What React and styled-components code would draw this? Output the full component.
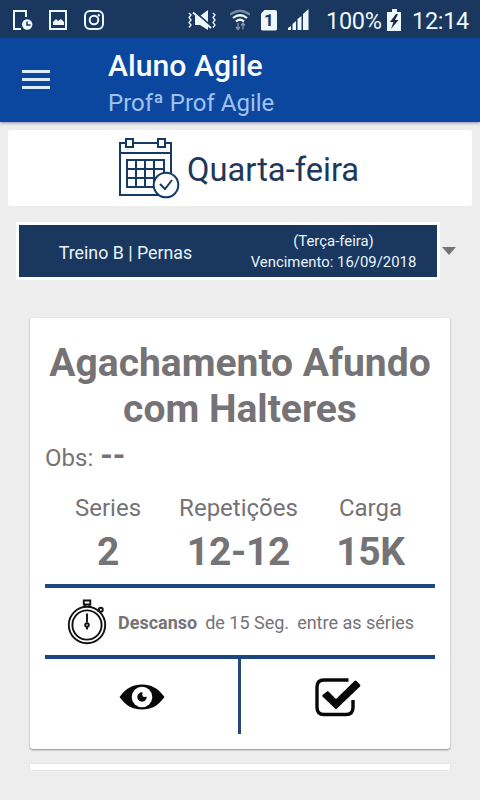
import styled, { createGlobalStyle } from 'styled-components';

const exercise = {
  name: ['Agachamento Afundo', 'com Halteres'],
  obs: '--',
  stats: [
    { label: 'Series', value: '2', width: 126 },
    { label: 'Repetições', value: '12-12', width: 135 },
    { label: 'Carga', value: '15K', width: 129 },
  ],
};

const StatusBar = () => (
  <Status>
    <StatusIcon width="22" height="24" viewBox="0 0 22 24" $left={12}>
      <path
        d="M14 9V3H2v18h7"
        fill="none"
        stroke="currentColor"
        strokeWidth="2"
      />
      <circle cx="15.2" cy="16.5" r="5.2" fill="currentColor" />
      <path d="M15 13.5V17h3.5" fill="none" stroke="#19375f" strokeWidth="1.5" />
    </StatusIcon>
    <StatusIcon width="20" height="22" viewBox="0 0 20 22" $left={14}>
      <rect
        x="2"
        y="2"
        width="16"
        height="18"
        fill="none"
        stroke="currentColor"
        strokeWidth="2"
      />
      <path d="M5 16v-3l3-3 2 2 3-2 3 3v3z" fill="currentColor" />
    </StatusIcon>
    <StatusIcon
      width="20"
      height="20"
      viewBox="0 0 20 20"
      $left={16}
      fill="none"
      stroke="currentColor"
      strokeWidth="2"
    >
      <rect x="1" y="1" width="18" height="18" rx="5" />
      <circle cx="10" cy="10" r="4.3" />
      <circle cx="14.8" cy="5.2" r=".6" strokeWidth="1.2" />
    </StatusIcon>
    <StatusIcon width="30" height="22" viewBox="0 0 30 22" $left={83}>
      <path d="M8 7h5l8-6v20l-8-5H8z" fill="currentColor" />
      <path d="M7 2l17 15" stroke="#19375f" strokeWidth="2" />
      <path d="M6 3.500l18 15.500" stroke="currentColor" strokeWidth="2" />
      <path
        d="M2 4l2 2-2 2.5 2 2.5-2 2.5 2 2.5-2 2.5M26 4l2 2-2 2.5 2 2.5-2 2.5 2 2.5-2 2.5"
        fill="none"
        stroke="currentColor"
        strokeWidth="1.3"
      />
    </StatusIcon>
    <StatusIcon width="20" height="22" viewBox="0 0 20 22" $left={13}>
      <g fill="none" stroke="currentColor" strokeWidth="2.200">
        <path d="M0 5.500q10-7.500 20 0" opacity=".45" />
        <path d="M3 9q7-5.500 14 0M6 12.500q4-3.500 8 0" />
      </g>
      <path
        d="M8 14v6.500m-2-2.500l2 2.500 2-2.500M13 20.500v-6.500m-2 2.500l2-2.500 2 2.500"
        fill="none"
        stroke="#8395ac"
        strokeWidth="1.3"
      />
    </StatusIcon>
    <SimCard>1</SimCard>
    <StatusIcon width="22" height="22" viewBox="0 0 22 22" $left={11}>
      <path
        d="M0 21v-2l3-2v4zM4.500 21v-6l3.500-3v9zM9.500 21V10l4-3v14zM15 21V5l5.500-5v21z"
        fill="currentColor"
      />
    </StatusIcon>
    <StatusText $left={16} $width={55}>
      100%
    </StatusText>
    <StatusIcon width="15" height="22" viewBox="0 0 15 22" $left={6}>
      <path d="M0 3h5V0h5v3h4v19H0z" fill="currentColor" />
      <path d="M9 5L3 13h3.500L4 20l7.500-9H8l3-6z" fill="#19283e" />
    </StatusIcon>
    <StatusText $left={10} $width={57}>
      12:14
    </StatusText>
  </Status>
);

const CalendarIcon = () => (
  <svg
    width="62"
    height="62"
    viewBox="0 0 62 62"
    fill="none"
    stroke="#153a65"
    strokeWidth="2"
  >
    <path d="M8 6H2v52h38M14 6h26M47 6h6v30M2 16h51" />
    <rect x="8" y="2" width="7" height="8" />
    <rect x="40" y="2" width="7" height="8" />
    <path d="M9 23h37v27H9zM18 23v27M27 23v27M36 23v27M9 32h37M9 41h37" />
    <circle cx="48" cy="48" r="12.3" fill="#fff" />
    <path d="M42 47l5 5 7-9" />
  </svg>
);

const StopwatchIcon = () => (
  <svg
    width="40"
    height="46"
    viewBox="0 0 40 46"
    fill="none"
    stroke="#111"
    strokeWidth="1.9"
  >
    <circle cx="20" cy="26" r="18.2" />
    <circle cx="20" cy="26" r="14.6" />
    <path d="M16.8 1.500h6.500v4h-6.500zM18 6v2.500M22.500 6v2.500M20 14.500v9" />
    <circle cx="20" cy="26" r="1.8" />
    <path d="M20 27.500v3M30.500 12.500l1.500-1" />
    <circle cx="33.800" cy="10.800" r="2" />
  </svg>
);

const EyeIcon = () => (
  <svg width="46" height="28" viewBox="0 0 46 28">
    <path
      d="M.5 14C7 5 14 1.500 23 1.500S39 5 45.500 14C39 23 32 26.500 23 26.500S7 23 .5 14z"
      fill="#080808"
    />
    <circle cx="23" cy="14" r="10.3" fill="#fff" />
    <circle cx="23" cy="14" r="4.7" fill="#080808" />
    <path d="M23.500 9l-.2 3q0 2 2 2l3.200-.5V9z" fill="#fff" />
  </svg>
);

const CheckIcon = () => (
  <svg width="46" height="40" viewBox="0 0 46 40">
    <path
      d="M33.500 3H9Q2 3 2 10v20.500q0 7 7 7h22q7 0 7-7V23"
      fill="none"
      stroke="#080808"
      strokeWidth="3.4"
    />
    <path
      d="M7.500 18l4.500-3.500q1-.5 2 .5l7 7L39.500 4q1-1 2 0l3.500 3.500q.8 1 0 2L22 31.500q-1 1-2 0l-12.500-12q-.5-.8 0-1.500z"
      fill="#080808"
    />
  </svg>
);

const App = () => (
  <Screen>
    <GlobalStyle />
    <StatusBar />
    <Header>
      <MenuButton aria-label="Menu">
        <MenuLine />
        <MenuLine />
        <MenuLine />
      </MenuButton>
      <div>
        <Student>Aluno Agile</Student>
        <Teacher>Profª Prof Agile</Teacher>
      </div>
    </Header>
    <Day>
      <CalendarIcon />
      <DayName>Quarta-feira</DayName>
    </Day>
    <Picker>
      <Workout>
        <WorkoutName>Treino B | Pernas</WorkoutName>
        <WorkoutInfo>
          <span>(Terça-feira)</span>
          <span>Vencimento: 16/09/2018</span>
        </WorkoutInfo>
      </Workout>
      <Caret />
    </Picker>
    <Card>
      <Title>
        {exercise.name.map((line) => (
          <TitleLine key={line}>{line}</TitleLine>
        ))}
      </Title>
      <Obs>
        Obs: <b>{exercise.obs}</b>
      </Obs>
      <Stats>
        {exercise.stats.map(({ label, value, width }) => (
          <Stat key={label} $width={width}>
            <StatLabel>{label}</StatLabel>
            <StatValue>{value}</StatValue>
          </Stat>
        ))}
      </Stats>
      <Rest>
        <StopwatchIcon />
        <RestText>
          <b>Descanso</b>
          <span>de 15 Seg.</span>
          <span>entre as séries</span>
        </RestText>
      </Rest>
      <Actions>
        <Action aria-label="Visualizar">
          <EyeIcon />
        </Action>
        <Divider />
        <Action aria-label="Concluir">
          <CheckIcon />
        </Action>
      </Actions>
    </Card>
    <NextCard />
  </Screen>
);

export default App;

const GlobalStyle = createGlobalStyle`
  * {
    box-sizing: border-box;
  }

  body {
    margin: 0;
  }
`;

const Screen = styled.div`
  width: 480px;
  height: 800px;
  overflow: hidden;
  background: #eeedee;
  color: #757375;
  font-family: Roboto, sans-serif;
`;

const Status = styled.div`
  display: flex;
  align-items: center;
  height: 38px;
  padding-top: 2px;
  background: #19375f;
  color: #edf8fb;
`;

const StatusIcon = styled.svg`
  flex: none;
  margin-left: ${({ $left }) => $left}px;
`;

const StatusText = styled.span`
  flex: none;
  width: ${({ $width }) => $width}px;
  margin-left: ${({ $left }) => $left}px;
  padding-top: 1px;
  font-size: 23.5px;
  letter-spacing: -0.3px;
  line-height: 28px;
  white-space: nowrap;
`;

const SimCard = styled.span`
  flex: none;
  width: 16px;
  height: 21px;
  margin-left: 11px;
  border-radius: 2px;
  background: #edf8fb;
  clip-path: polygon(4px 0, 100% 0, 100% 100%, 0 100%, 0 4px);
  color: #19375f;
  font-size: 17px;
  font-weight: 700;
  line-height: 21px;
  text-align: center;
`;

const Header = styled.header`
  display: flex;
  height: 84px;
  background: #0c479f;
  box-shadow: 0 1px 3px rgba(40, 50, 120, 0.5);
`;

const MenuButton = styled.button`
  display: flex;
  flex-direction: column;
  gap: 5px;
  width: 28px;
  height: 19px;
  margin: 32px 58px 0 22px;
  padding: 0;
  border: 0;
  background: none;
`;

const MenuLine = styled.span`
  width: 28px;
  height: 3px;
  background: #dcedfc;
`;

const Student = styled.h1`
  margin: 10px 0 0;
  color: #f7fbff;
  font-size: 30.2px;
  font-weight: 500;
  line-height: 36px;
`;

const Teacher = styled.div`
  margin-top: 4px;
  color: #9fc2ef;
  font-size: 24px;
  line-height: 30px;
`;

const Day = styled.section`
  display: flex;
  align-items: center;
  height: 76px;
  margin: 8px 8px 0;
  padding-left: 110px;
  border-radius: 3px;
  background: #fff;
`;

const DayName = styled.h2`
  margin: 4px 0 0 7px;
  color: #1e385a;
  font-size: 32.7px;
  font-weight: 400;
  line-height: 40px;
`;

const Picker = styled.div`
  display: flex;
  align-items: center;
  height: 58px;
  margin: 16px 0 0 16px;
`;

const Workout = styled.div`
  display: flex;
  width: 424px;
  height: 58px;
  border: 3px solid #fff;
  background: #19375f;
  color: #e9f3fa;
`;

const WorkoutName = styled.div`
  width: 213px;
  padding-top: 1px;
  font-size: 17.8px;
  line-height: 53px;
  text-align: center;
`;

const WorkoutInfo = styled.div`
  display: flex;
  flex: 1;
  flex-direction: column;
  align-items: center;
  padding: 6px 2px 0 0;
  font-size: 14.9px;
  line-height: 21px;
  white-space: nowrap;
`;

const Caret = styled.span`
  margin-left: 2px;
  border: 7px solid transparent;
  border-top: 8px solid #747474;
  border-bottom: 0;
`;

const Card = styled.article`
  height: 431px;
  margin: 38px 30px 0;
  padding: 22px 15px 0;
  border-radius: 3px;
  background: #fff;
  box-shadow: 0 1px 2px rgba(0, 0, 0, 0.4);
`;

const Title = styled.h2`
  margin: 0;
  font-size: 39px;
  font-weight: 700;
  line-height: 46px;
  text-align: center;
  white-space: nowrap;
`;

const TitleLine = styled.span`
  display: block;
`;

const Obs = styled.p`
  height: 30px;
  margin: 11px 0 0;
  font-size: 24px;
  line-height: 30px;
  white-space: nowrap;

  b {
    margin-left: 1px;
    font-size: 32px;
    line-height: 20px;
  }
`;

const Stats = styled.div`
  display: flex;
  height: 115px;
  border-bottom: 4px solid #194a82;
`;

const Stat = styled.div`
  width: ${({ $width }) => $width}px;
  padding-top: 20px;
  text-align: center;
`;

const StatLabel = styled.div`
  font-size: 24px;
  line-height: 30px;
`;

const StatValue = styled.div`
  margin-top: 6px;
  font-size: 39px;
  font-weight: 700;
  letter-spacing: -0.3px;
  line-height: 46px;
`;

const Rest = styled.div`
  display: flex;
  align-items: center;
  height: 71px;
  padding-left: 22px;
  border-bottom: 4px solid #1c467f;
`;

const RestText = styled.p`
  display: flex;
  gap: 8px;
  margin: 2px 0 0 11px;
  font-size: 18px;
  line-height: 24px;
  white-space: nowrap;
`;

const Actions = styled.div`
  display: grid;
  grid-template-columns: 193px 3px 1fr;
  height: 75px;
`;

const Action = styled.button`
  display: flex;
  align-items: center;
  justify-content: center;
  padding: 0;
  border: 0;
  background: none;
`;

const Divider = styled.span`
  background: #254879;
`;

const NextCard = styled.div`
  height: 6px;
  margin: 15px 30px 0;
  background: #fff;
  box-shadow: 0 0 2px rgba(0, 0, 0, 0.12);
`;
